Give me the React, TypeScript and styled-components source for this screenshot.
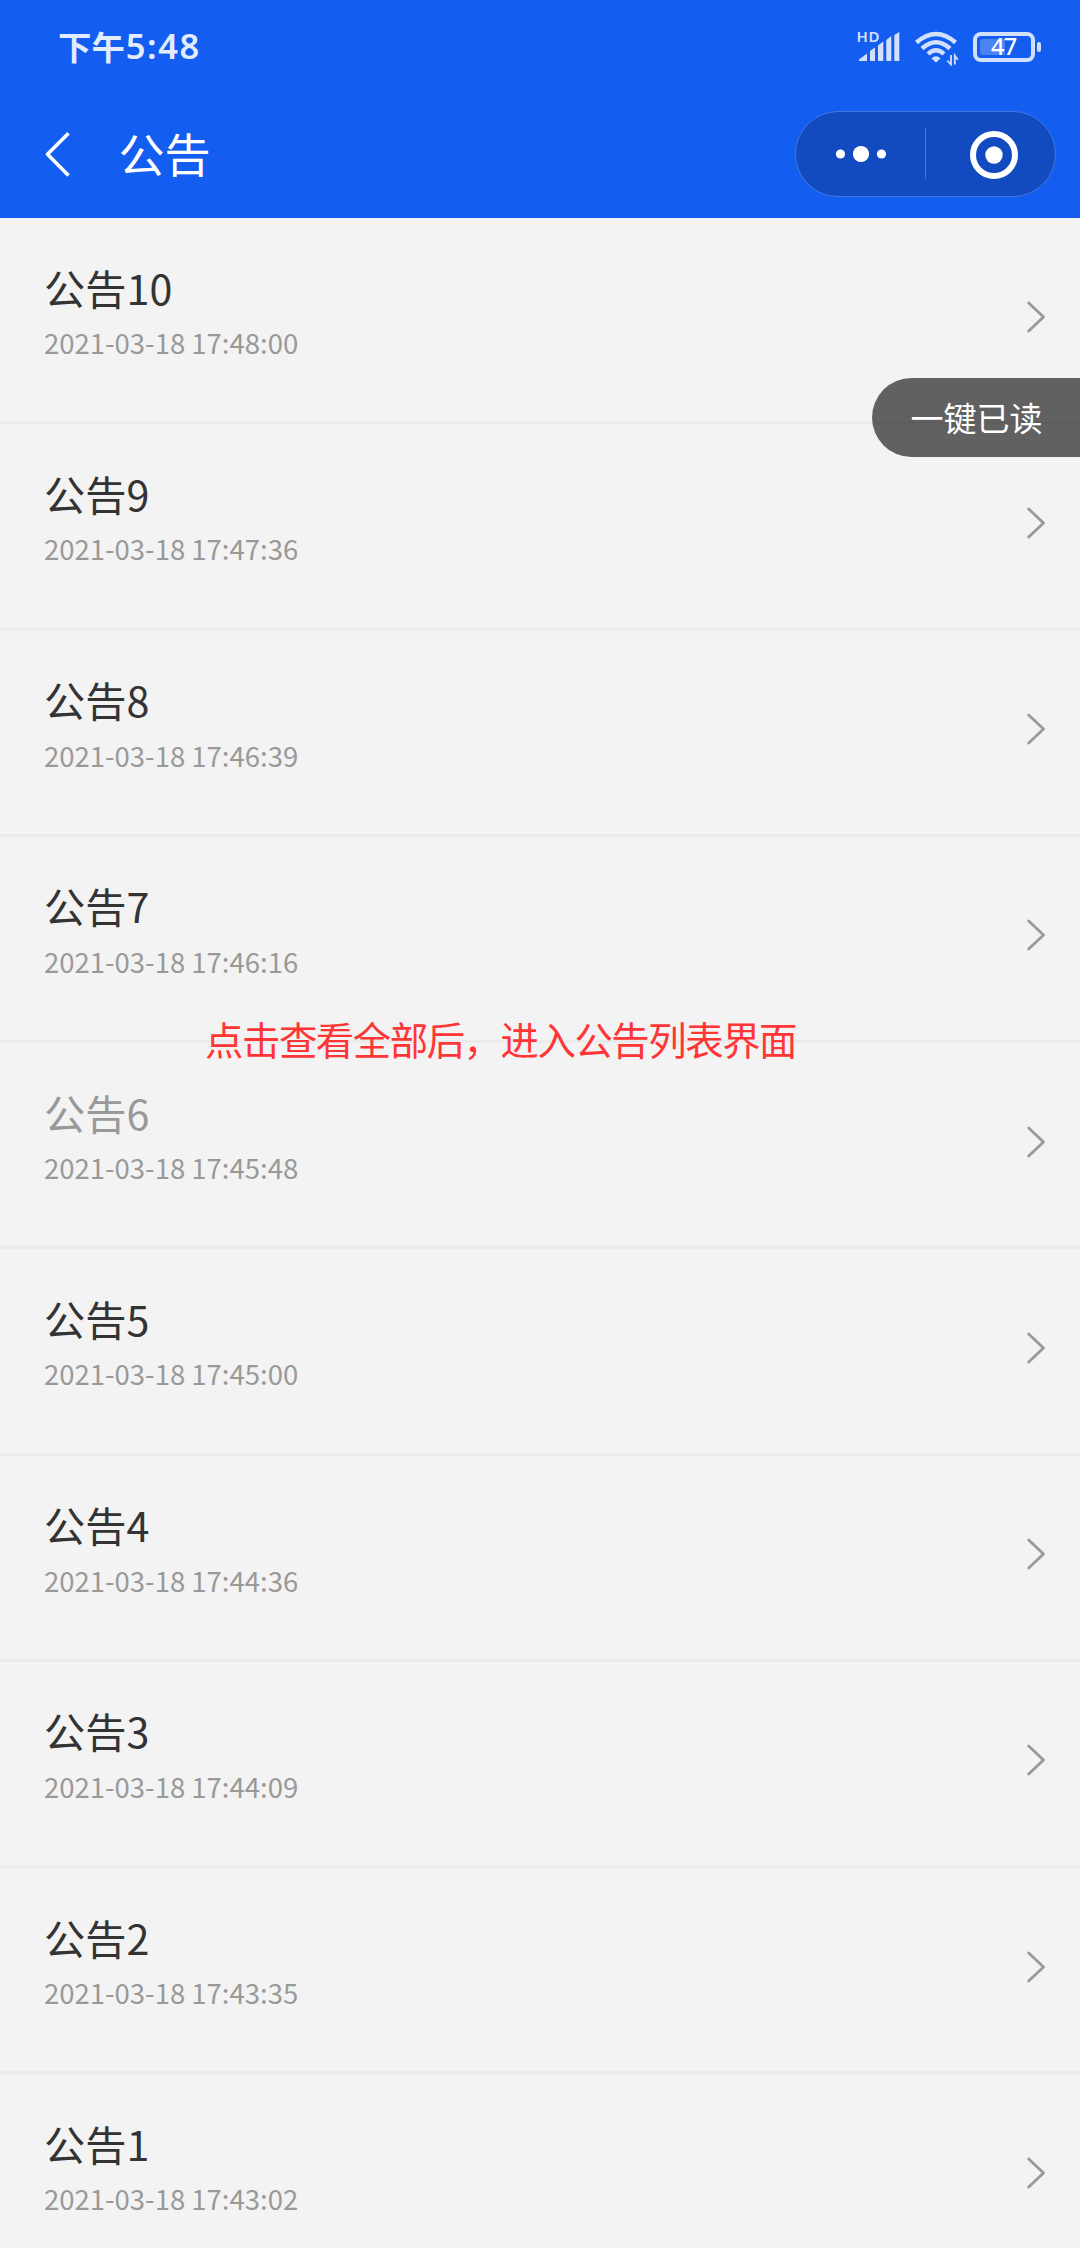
import React from "react";
import styled, { createGlobalStyle } from "styled-components";

const GlobalStyle = createGlobalStyle`
  * { box-sizing: border-box; }
  body {
    margin: 0;
    background: #f3f3f3;
    font-family: "Noto Sans CJK SC", "Noto Sans", sans-serif;
  }
`;

const Page = styled.div`
  position: relative;
  width: 1080px;
  height: 2248px;
  overflow: hidden;
  background: #f3f3f3;
`;

const Header = styled.header`
  height: 218.15px;
  background: #135ef0;
  color: #fff;
`;

const StatusBar = styled.div`
  display: flex;
  justify-content: space-between;
  height: 90px;
  padding: 0 39px 0 58px;
  color: #e3ecfd;
`;

const Clock = styled.div`
  display: flex;
  font-size: 33.4px;
  line-height: 92px;
  font-weight: 700;
`;

const ClockDigits = styled.span`
  font-family: "Noto Sans", sans-serif;
  font-weight: 600;
  font-size: 34.5px;
  letter-spacing: 1.6px;
  margin-left: 1px;
`;

const StatusIcons = styled.div`
  display: flex;
  padding-top: 28px;
`;

const Battery = styled.div`
  position: relative;
  width: 69px;
  height: 38px;
`;

const BatteryLevel = styled.span`
  position: absolute;
  left: 19px;
  top: 0;
  font: 500 23.5px/37px "Noto Sans", sans-serif;
  letter-spacing: -0.6px;
  color: #fff;
`;

const NavBar = styled.div`
  display: flex;
  align-items: center;
  height: 127.75px;
  padding: 0 24px 0 44px;
`;

const NavTitle = styled.h1`
  flex: 1;
  margin: -3px 0 0 44.5px;
  font-size: 46px;
  font-weight: 400;
  line-height: 60px;
`;

const Capsule = styled.div`
  display: flex;
  width: 261px;
  height: 86px;
  border: 1px solid #4377d9;
  border-radius: 43px;
  background: #114bbf;
`;

const CapsuleButton = styled.button<{ $width: number; $inset?: number }>`
  display: flex;
  align-items: center;
  justify-content: center;
  width: ${(p) => p.$width}px;
  padding: 0 0 0 ${(p) => p.$inset ?? 0}px;
  border: 0;
  background: none;
`;

const CapsuleDivider = styled.span`
  align-self: center;
  width: 1px;
  height: 51px;
  background: #4377d9;
`;

const List = styled.ul`
  margin: 0;
  padding: 0;
  list-style: none;
`;

const Row = styled.li`
  display: flex;
  justify-content: space-between;
  height: 206.25px;
  padding: 40.5px 34px 0 44px;
  border-bottom: 3px solid #ebebeb;
`;

const RowTitle = styled.div<{ $read?: boolean }>`
  font-size: 41.25px;
  line-height: 56px;
  color: ${(p) => (p.$read ? "#999" : "#333")};
`;

const RowDate = styled.div`
  margin-top: 8.5px;
  font-size: 27.5px;
  line-height: 38px;
  color: #999;
`;

const RowArrow = styled.svg`
  margin-top: 41px;
`;

const ReadAllButton = styled.button`
  position: absolute;
  right: 0;
  top: 378px;
  width: 208px;
  height: 79px;
  padding: 0 0 0 38.5px;
  border: 0;
  border-radius: 39.5px 0 0 39.5px;
  background: rgba(0, 0, 0, 0.6);
  color: #fff;
  font-family: inherit;
  font-size: 33px;
  line-height: 79px;
  text-align: left;
`;

const Caption = styled.div`
  position: absolute;
  left: 205px;
  top: 1009px;
  font-size: 38.4px;
  letter-spacing: -1.45px;
  line-height: 58px;
  white-space: nowrap;
  color: #ff3536;
`;

const notices = [
  { title: "公告10", date: "2021-03-18 17:48:00" },
  { title: "公告9", date: "2021-03-18 17:47:36" },
  { title: "公告8", date: "2021-03-18 17:46:39" },
  { title: "公告7", date: "2021-03-18 17:46:16" },
  { title: "公告6", date: "2021-03-18 17:45:48", read: true },
  { title: "公告5", date: "2021-03-18 17:45:00" },
  { title: "公告4", date: "2021-03-18 17:44:36" },
  { title: "公告3", date: "2021-03-18 17:44:09" },
  { title: "公告2", date: "2021-03-18 17:43:35" },
  { title: "公告1", date: "2021-03-18 17:43:02" },
];

const SignalIcon = () => (
  <svg width="59" height="38" viewBox="-2 0 59 38" fill="#d3e0fb" overflow="visible">
    <text x="-0.5" y="14" fontFamily="Noto Sans" fontWeight="600" fontSize="15" textLength="23">HD</text>
    <path d="M2 33v-1.500L10 25.500v7.500zM13 33V23L18 19.500V33zM21 33V17.500L26.300 13.500V33zM29.300 33V12L34.300 8V33zM37.300 33V7L42.300 4V33z" />
  </svg>
);

const WifiIcon = () => (
  <svg width="58" height="38" viewBox="914 28 58 38" fill="none" stroke="#d3e0fb">
    <path d="M916.500 42.500Q936 25.500 955.500 42.500M922 48.500Q936 36 950 48.500M928 54Q936 46.500 944 54" strokeWidth="4.400" />
    <path d="M931.500 58.500Q936 54 940.500 58.500L936 62.500z" fill="#d3e0fb" stroke="none" />
    <path d="M951 55v9.500L947.200 60.500M954.800 64.500V55.500L957.800 59.800" strokeWidth="1.800" />
  </svg>
);

const BatteryIcon = () => (
  <svg width="69" height="38" viewBox="972 28 69 38">
    <rect x="975" y="34" width="58" height="26" rx="6" fill="none" stroke="#d3e0fb" strokeWidth="4" />
    <path d="M983 39H1005V55H983Q980 55 980 52V42Q980 39 983 39" fill="#4a84f3" />
    <rect x="1037" y="42" width="4" height="10" rx="2" fill="#d3e0fb" />
  </svg>
);

export default function App() {
  return (
    <Page>
      <GlobalStyle />
      <Header>
        <StatusBar>
          <Clock>
            下午<ClockDigits>5:48</ClockDigits>
          </Clock>
          <StatusIcons>
            <SignalIcon />
            <WifiIcon />
            <Battery>
              <BatteryIcon />
              <BatteryLevel>47</BatteryLevel>
            </Battery>
          </StatusIcons>
        </StatusBar>
        <NavBar>
          <svg width="30" height="48" viewBox="44 129 30 48" fill="none" stroke="#fff" strokeWidth="3.6">
            <path d="M68.500 132.300L47.500 153.300L68.500 174.600" strokeLinejoin="round" />
          </svg>
          <NavTitle>公告</NavTitle>
          <Capsule>
            <CapsuleButton $width={129} aria-label="更多">
              <svg width="52" height="18" viewBox="0 0 52 18" fill="#fff">
                <circle cx="5.500" cy="9" r="4.600" />
                <circle cx="26" cy="9" r="8.100" />
                <circle cx="46.500" cy="9" r="4.600" />
              </svg>
            </CapsuleButton>
            <CapsuleDivider />
            <CapsuleButton $width={129} $inset={6} aria-label="关闭">
              <svg width="50" height="50" viewBox="0 -1 50 50" fill="#fff">
                <circle cx="25" cy="25" r="21" fill="none" stroke="#fff" strokeWidth="6" />
                <circle cx="25" cy="25" r="8.700" />
              </svg>
            </CapsuleButton>
          </Capsule>
        </NavBar>
      </Header>
      <List>
        {notices.map((n) => (
          <Row key={n.title}>
            <div>
              <RowTitle $read={n.read}>{n.title}</RowTitle>
              <RowDate>{n.date}</RowDate>
            </div>
            <RowArrow width="20" height="34" viewBox="0 0 20 34" fill="none" stroke="#999" strokeWidth="2.8" strokeLinecap="round" strokeLinejoin="round">
              <path d="M2.700 3L17.500 17L2.700 31" />
            </RowArrow>
          </Row>
        ))}
      </List>
      <ReadAllButton>一键已读</ReadAllButton>
      <Caption>点击查看全部后，进入公告列表界面</Caption>
    </Page>
  );
}
